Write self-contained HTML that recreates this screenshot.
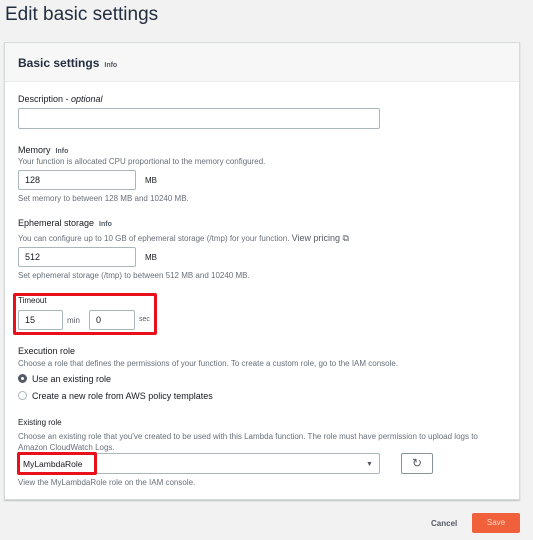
<!DOCTYPE html>
<html><head><style>
*{box-sizing:border-box;margin:0;padding:0}
body{width:533px;height:540px;background:#f2f2f2;font-family:"Liberation Sans",sans-serif;position:relative;overflow:hidden;color:#16191f}
.a{position:absolute}
.lbl{font-size:9px;color:#16191f}
.help{font-size:8px;color:#687078}
.inp{position:absolute;background:#fff;border:1px solid #aab7b8;border-radius:2px;font-size:9px;padding-left:6px;display:flex;align-items:center}
.info{font-size:7px;color:#545b64;font-weight:bold;margin-left:5px}
.red{position:absolute;border:3px solid #e8101a;border-radius:2px}
</style></head><body>
<div class="a" style="left:5px;top:4px;font-size:19px;color:#232f3e">Edit basic settings</div>
<div class="a" style="left:4px;top:42px;width:516px;height:458px;background:#fff;border:1px solid #d5dbdb;box-shadow:0 1px 1px rgba(0,0,0,.2)"></div>
<div class="a" style="left:5px;top:43px;width:514px;height:39px;background:#f7f7f7;border-bottom:1px solid #eaeded"></div>
<div class="a" style="left:18px;top:56px;font-size:12px;font-weight:bold;color:#232f3e">Basic settings<span class="info">Info</span></div>

<div class="a lbl" style="left:18px;top:94px">Description - <i>optional</i></div>
<div class="inp" style="left:18px;top:108px;width:362px;height:21px"></div>

<div class="a lbl" style="left:18px;top:145px">Memory<span class="info">Info</span></div>
<div class="a help" style="left:18px;top:157px">Your function is allocated CPU proportional to the memory configured.</div>
<div class="inp" style="left:18px;top:170px;width:118px;height:20px">128</div>
<div class="a lbl" style="left:145px;top:176px;font-size:8px">MB</div>
<div class="a help" style="left:18px;top:194px">Set memory to between 128 MB and 10240 MB.</div>

<div class="a lbl" style="left:18px;top:218px">Ephemeral storage<span class="info">Info</span></div>
<div class="a help" style="left:18px;top:233px">You can configure up to 10 GB of ephemeral storage (/tmp) for your function. <span style="font-size:9px;color:#545b64">View pricing ⧉</span></div>
<div class="inp" style="left:18px;top:247px;width:118px;height:20px">512</div>
<div class="a lbl" style="left:145px;top:253px;font-size:8px">MB</div>
<div class="a help" style="left:18px;top:271px">Set ephemeral storage (/tmp) to between 512 MB and 10240 MB.</div>

<div class="red" style="left:13px;top:293px;width:144px;height:42px"></div>
<div class="a lbl" style="left:18px;top:296px;font-size:8px">Timeout</div>
<div class="inp" style="left:18px;top:310px;width:45px;height:20px">15</div>
<div class="a lbl" style="left:67px;top:316px;font-size:8px;color:#545b64">min</div>
<div class="inp" style="left:89px;top:310px;width:46px;height:20px">0</div>
<div class="a lbl" style="left:139px;top:316px;font-size:7px;color:#545b64">sec</div>

<div class="a lbl" style="left:18px;top:346px">Execution role</div>
<div class="a help" style="left:18px;top:359px">Choose a role that defines the permissions of your function. To create a custom role, go to the IAM console.</div>
<div class="a" style="left:18px;top:374px;width:9px;height:9px;border-radius:50%;border:3px solid #545b64"></div>
<div class="a lbl" style="left:32px;top:374px">Use an existing role</div>
<div class="a" style="left:18px;top:391px;width:9px;height:9px;border-radius:50%;border:1px solid #aab7b8"></div>
<div class="a lbl" style="left:32px;top:391px">Create a new role from AWS policy templates</div>

<div class="a lbl" style="left:18px;top:418px;font-size:8px">Existing role</div>
<div class="a help" style="left:18px;top:431px;width:490px;line-height:11px">Choose an existing role that you've created to be used with this Lambda function. The role must have permission to upload logs to Amazon CloudWatch Logs.</div>
<div class="inp" style="left:18px;top:453px;width:362px;height:21px"></div>
<div class="a" style="left:366px;top:461px;font-size:7px;color:#545b64">▼</div>
<div class="red" style="left:17px;top:452px;width:80px;height:23px"></div>
<div class="a lbl" style="left:23px;top:459px;font-size:8.5px">MyLambdaRole</div>
<div class="a" style="left:401px;top:453px;width:32px;height:21px;border:1px solid #879596;border-radius:2px;background:#fff;text-align:center;font-size:12px;color:#545b64;line-height:19px">↻</div>
<div class="a help" style="left:18px;top:478px">View the MyLambdaRole role on the IAM console.</div>

<div class="a" style="left:431px;top:519px;font-size:8px;font-weight:bold;color:#545b64">Cancel</div>
<div class="a" style="left:472px;top:513px;width:48px;height:20px;background:#f0603a;border-radius:2px;color:#ffd9c8;font-size:8px;text-align:center;line-height:20px">Save</div>
</body></html>
